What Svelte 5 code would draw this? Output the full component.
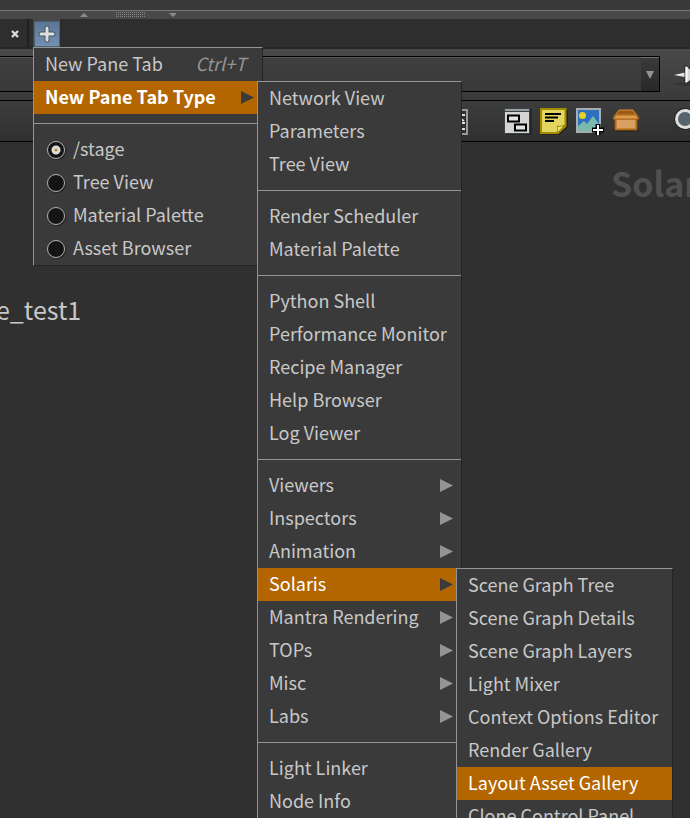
<script lang="ts">
  type Item = {
    label?: string;
    separator?: boolean;
    shortcut?: string;
    radio?: boolean;
    strong?: boolean;
    active?: boolean;
    arrow?: boolean;
    items?: Item[];
  };

  const sep: Item = { separator: true };
  const plain = (...labels: string[]): Item[] => labels.map((label) => ({ label }));
  const folders = (...labels: string[]): Item[] => labels.map((label) => ({ label, arrow: true }));

  const solaris: Item[] = [
    ...plain("Scene Graph Tree", "Scene Graph Details", "Scene Graph Layers", "Light Mixer"),
    ...plain("Context Options Editor", "Render Gallery"),
    { label: "Layout Asset Gallery", active: true },
    { label: "Clone Control Panel" },
  ];

  const paneTypes: Item[] = [
    ...plain("Network View", "Parameters", "Tree View"),
    sep,
    ...plain("Render Scheduler", "Material Palette"),
    sep,
    ...plain("Python Shell", "Performance Monitor", "Recipe Manager", "Help Browser", "Log Viewer"),
    sep,
    ...folders("Viewers", "Inspectors", "Animation"),
    { label: "Solaris", arrow: true, active: true, items: solaris },
    ...folders("Mantra Rendering", "TOPs", "Misc", "Labs"),
    sep,
    ...plain("Light Linker", "Node Info"),
  ];

  const tabMenu: Item[] = [
    { label: "New Pane Tab", shortcut: "Ctrl+T" },
    { label: "New Pane Tab Type", strong: true, active: true, arrow: true, items: paneTypes },
    sep,
    { label: "/stage", radio: true },
    { label: "Tree View", radio: true },
    { label: "Material Palette", radio: true },
    { label: "Asset Browser", radio: true },
  ];

  let current = $state("/stage");
</script>

{#snippet menu(items: Item[], kind: string)}
  <ul class="menu {kind}">
    {#each items as item}
      {#if item.separator}
        <li class="separator"></li>
      {:else if item.radio}
        <li>
          <label class="row">
            <input type="radio" name="pane" value={item.label} bind:group={current} />
            <span class="label">{item.label}</span>
          </label>
        </li>
      {:else}
        <li>
          <button class="row" class:active={item.active} class:strong={item.strong}>
            <span class="label">{item.label}</span>
            {#if item.shortcut}<span class="shortcut">{item.shortcut}</span>{/if}
            {#if item.arrow}
              <svg class="arrow" width="13" height="13" viewBox="0 0 13 13"><path d="M0 0L13 6.500L0 13Z" /></svg>
            {/if}
          </button>
          {#if item.items}{@render menu(item.items, "submenu")}{/if}
        </li>
      {/if}
    {/each}
  </ul>
{/snippet}

<div class="desktop">
  <div class="upper"></div>
  <div class="splitter">
    <svg width="96" height="8" viewBox="0 0 96 8">
      <path d="M0 6L4 2L8 6Z M89 2H97L93 6Z" fill="#8c8c8c" />
      <path d="M36 1.500H66 M36 3.500H66 M36 5.500H66" stroke="#858585" stroke-dasharray="1 1" />
    </svg>
  </div>

  <div class="tabs">
    <button class="close" aria-label="Close tab">
      <svg width="10" height="10" viewBox="0 0 10 10"><path d="M2 2L8 8M8 2L2 8" stroke="#dadada" stroke-width="2.400" /></svg>
    </button>
    <div class="adder">
      <button class="add" aria-label="New pane tab">
        <svg width="18" height="18" viewBox="0 0 18 18">
          <path d="M9 3V15M3 9H15" stroke="#465668" stroke-width="5" stroke-linecap="round" />
          <path d="M9 3V15M3 9H15" stroke="#dfdfdc" stroke-width="3" stroke-linecap="round" />
        </svg>
      </button>
      {@render menu(tabMenu, "root")}
    </div>
  </div>

  <div class="pathbar">
    <div class="field">
      <input type="text" aria-label="Path" />
      <button aria-label="Path history">
        <svg width="10" height="8" viewBox="0 0 10 8"><path d="M1 0H9L5 8Z" fill="#929292" /></svg>
      </button>
    </div>
    <button class="tool" aria-label="Pin">
      <svg width="28" height="28" viewBox="0 0 28 28">
        <ellipse cx="13" cy="24" rx="12" ry="2" fill="#2e2e2e" opacity=".6" />
        <path d="M0 15L11 12.500V17Z" fill="#e8e8e8" />
        <path d="M11 5C14 6 14 9 18 10L24 8V22L18 20C14 21 14 23 11 24Z" fill="#d4d4d4" stroke="#222" />
        <path d="M12.500 7V22" stroke="#fff" stroke-width="2" />
      </svg>
    </button>
  </div>

  <div class="toolbar">
    <button class="tool" aria-label="Table">
      <svg width="28" height="28" viewBox="0 0 28 28">
        <rect x="3" y="3" width="23" height="24" fill="#303030" stroke="#999" stroke-width="2" />
        <path d="M20 8H24M20 12L23 14M20 16H24M20 22H24" stroke="#ddd" stroke-width="2" />
      </svg>
    </button>
    <button class="tool boxes" aria-label="Network boxes">
      <svg width="28" height="28" viewBox="0 0 28 28">
        <rect x="2" y="2" width="26" height="26" fill="#242729" />
        <rect x="0" y="1" width="26" height="26" fill="#3b4449" />
        <rect x="1" y="2" width="24" height="2" fill="#9b9f9e" />
        <rect x="1" y="5" width="24" height="21" fill="#d4d4d2" />
        <path d="M4 8.500H15V14.500H4ZM11 17.500H22V23.500H11Z" fill="#e4e4e4" stroke="#000" stroke-width="2" />
      </svg>
    </button>
    <button class="tool" aria-label="Sticky note">
      <svg width="28" height="28" viewBox="0 0 28 28">
        <path d="M2 3H28V20L20 28H2Z" fill="#232323" />
        <path d="M1 2H25.500V19L18 26H1Z" fill="#e2d65e" stroke="#a18c00" stroke-width="2" />
        <path d="M25 18L17 26C18 22 18 20 17 19C20 20 22 19 25 18Z" fill="#f0e87f" stroke="#a18c00" />
        <path d="M5 7H21M5 10.500H18M5 14H14" stroke="#000" stroke-width="2" />
      </svg>
    </button>
    <button class="tool" aria-label="Background image">
      <svg width="28" height="28" viewBox="0 0 28 28">
        <rect x="1" y="2" width="23" height="23" fill="#2e70bd" stroke="#a8adb0" stroke-width="2" />
        <path d="M2 19L8 14L11 17L17 9L23 17V24H2Z" fill="#7bb9ae" />
        <circle cx="6.500" cy="8.500" r="3.500" fill="#e6d221" />
        <path d="M22 17V28M16 23H28" stroke="#000" stroke-width="5" />
        <path d="M22 18V28M17 23H27" stroke="#fff" stroke-width="2" />
      </svg>
    </button>
    <button class="tool" aria-label="Package">
      <svg width="28" height="28" viewBox="0 0 28 28">
        <ellipse cx="14" cy="23" rx="13" ry="2" fill="#262626" />
        <path d="M3 11H25V23H3Z" fill="#c98131" stroke="#905413" />
        <path d="M5 13H23V21H5Z" fill="#d9a061" />
        <path d="M7 3H21L24 8H4Z" fill="#9c5a12" stroke="#d68f3d" />
        <path d="M7 3L4 8L0 11L5 5ZM21 3L24 8L28 11L23 5Z" fill="#bb7628" />
        <path d="M4 8H24L27 12H1Z" fill="#dc9b4f" stroke="#a6641a" />
      </svg>
    </button>
    <button class="tool search" aria-label="Search">
      <svg width="28" height="28" viewBox="0 0 28 28">
        <circle cx="11" cy="12" r="9" fill="#4c5a62" stroke="#222" stroke-width="4" />
        <circle cx="11" cy="12" r="8.500" fill="#55646d" stroke="#dedede" stroke-width="3" />
        <path d="M18 19L26 27" stroke="#dedede" stroke-width="4" />
      </svg>
    </button>
  </div>

  <div class="canvas">
    <span class="context">Solaris</span>
    <span class="node">e_test1</span>
  </div>
</div>

<style>
  :global(body) {
    background: #303030;
  }
  .desktop {
    position: relative;
    display: flex;
    flex-direction: column;
    height: 100vh;
    overflow: hidden;
    background: #303030;
    color: #c8c8c8;
    font-family: "Noto Sans CJK SC", "Noto Sans", sans-serif;
    font-size: 18px;
  }
  button {
    display: flex;
    align-items: center;
    justify-content: center;
    padding: 0;
    border: none;
    background: none;
    color: inherit;
    font: inherit;
  }
  svg {
    display: block;
    flex: none;
  }
  .upper {
    flex: none;
    height: 10px;
    background: #393939;
  }
  .splitter {
    flex: none;
    height: 8px;
    padding-left: 80px;
    border-top: 1px solid #777;
    background: #494949;
  }
  .tabs {
    display: flex;
    flex: none;
    height: 28px;
    border-bottom: 2px solid #262626;
    background: #2e2e2e;
  }
  .close {
    width: 29px;
    padding: 2px 0 0 2px;
    border-right: 2px solid #202020;
  }
  .adder {
    position: relative;
    z-index: 1;
    margin-left: 4px;
    padding: 2px 0 0 1px;
    background: #484848;
  }
  .add {
    width: 26px;
    height: 26px;
    border: 1px solid #4c6078;
    background: linear-gradient(#5c7796, #7290b0);
  }
  .pathbar {
    display: flex;
    flex: none;
    gap: 14px;
    margin-right: -12px;
    padding: 7px 0 8px;
    border-bottom: 1px solid #000;
    background: linear-gradient(#494949, #3a3a3a);
  }
  .field {
    display: flex;
    flex: 1;
    box-sizing: border-box;
    height: 36px;
    border: 1px solid #000;
    border-left: none;
    background: linear-gradient(#3f3f3f, #393939);
  }
  .field input {
    flex: 1;
    min-width: 0;
    padding: 0 8px;
    border: none;
    border-top: 1px solid #555;
    background: none;
    color: inherit;
    font: inherit;
  }
  .field button {
    width: 18px;
    border-top: 1px solid #707070;
    background: linear-gradient(#3a3a3a, #282828);
  }
  .pathbar .tool {
    margin-top: 4px;
  }
  .toolbar {
    display: flex;
    flex: none;
    align-items: center;
    justify-content: flex-end;
    gap: 8px;
    height: 40px;
    margin-right: -12px;
    border-bottom: 1px solid #000;
    background: linear-gradient(#3d3d3d, #303030);
  }
  .tool {
    flex: none;
    width: 28px;
    height: 28px;
  }
  .boxes {
    margin-left: 27px;
  }
  .search {
    margin-left: 26px;
  }
  .canvas {
    position: relative;
    flex: 1;
    overflow: hidden;
    white-space: nowrap;
  }
  .context {
    position: absolute;
    top: 17px;
    left: 611px;
    color: #505050;
    font-size: 34px;
    font-weight: 700;
    line-height: 48px;
  }
  .node {
    position: absolute;
    top: 149px;
    left: -4px;
    font-size: 25px;
    line-height: 36px;
  }
  .menu {
    position: absolute;
    box-sizing: border-box;
    margin: 0;
    padding: 0;
    border: 1px solid #242424;
    border-top-color: #949494;
    border-left-color: #949494;
    background: #3a3a3a;
    list-style: none;
    white-space: nowrap;
  }
  .root {
    top: 28px;
    left: 0;
    width: 230px;
  }
  .submenu {
    top: 0;
    left: calc(100% - 5px);
    z-index: 1;
    width: 205px;
  }
  .submenu .submenu {
    width: 217px;
  }
  li {
    position: relative;
  }
  .separator {
    height: 1px;
    margin: 9px 0;
    background: #949494;
  }
  .row {
    display: flex;
    align-items: center;
    justify-content: flex-start;
    box-sizing: border-box;
    width: 100%;
    height: 33px;
    padding: 0 8px 0 11px;
    line-height: 31px;
    text-align: left;
  }
  .label,
  .shortcut {
    align-self: flex-start;
  }
  .label {
    flex: 1;
  }
  .shortcut {
    padding-right: 8px;
    color: #949494;
    font-style: italic;
  }
  .arrow {
    fill: #949494;
  }
  .active {
    background: #b36500;
    color: #fff;
  }
  .active .arrow {
    fill: #3a3a3a;
  }
  .strong {
    font-weight: 700;
  }
  input[type="radio"] {
    box-sizing: border-box;
    width: 18px;
    height: 18px;
    margin: 0 8px 0 2px;
    border: 1px solid #b4b4b4;
    border-radius: 50%;
    appearance: none;
    background: #141414;
    box-shadow: 1px 1px 1px #222;
  }
  input[type="radio"]:checked {
    background: radial-gradient(circle, #c08a28 1px, #dedede 2px, #dedede 4px, #141414 5px);
  }
</style>
